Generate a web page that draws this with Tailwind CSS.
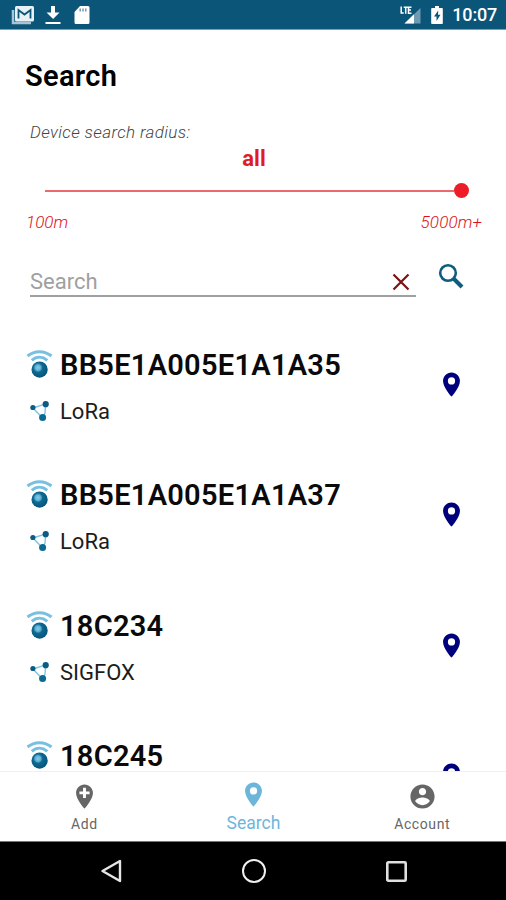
<!DOCTYPE html>
<html lang="en">
<head>
  <meta charset="UTF-8" />
  <meta name="viewport" content="width=device-width, initial-scale=1.0"/>
  <title>Search</title>
  <script src="https://cdn.jsdelivr.net/npm/@tailwindcss/browser@4"></script>
</head>
<body class="bg-white h-screen flex flex-col overflow-hidden font-[Roboto,sans-serif] text-black">

  <!-- Shared icons -->
  <svg class="absolute w-0 h-0" xmlns="http://www.w3.org/2000/svg">
    <defs>
      <radialGradient id="ball" cx="40%" cy="38%" r="62%">
        <stop offset="0" stop-color="#86cbe9"/>
        <stop offset="0.28" stop-color="#5fb0d4"/>
        <stop offset="0.46" stop-color="#0d6a92"/>
        <stop offset="1" stop-color="#07557a"/>
      </radialGradient>
    </defs>
    <symbol id="device" viewBox="0 0 28 30">
      <path d="M1.500 6C8.500.2 18.500.2 25.500 6" fill="none" stroke="#78c0e2" stroke-width="3"/>
      <path d="M5.800 10.300C10.500 6.300 16.500 6.300 21.300 10.300" fill="none" stroke="#78c0e2" stroke-width="3"/>
      <circle cx="13.600" cy="19.600" r="8.100" fill="url(#ball)"/>
    </symbol>
    <symbol id="network" viewBox="0 0 20 22">
      <path d="M3 7L15.700 2.900L15 12L12.600 17Z" fill="none" stroke="#7cc4e6" stroke-width="1.400"/>
      <circle cx="2.900" cy="6.500" r="2.600" fill="#0b5c82"/>
      <circle cx="15.700" cy="3.200" r="3.100" fill="#0b5c82"/>
      <circle cx="12.600" cy="16.500" r="3.500" fill="#0b6a92"/>
    </symbol>
    <symbol id="pin" viewBox="0 0 24 24">
      <path fill="currentColor" d="M12 2C8.130 2 5 5.130 5 9c0 5.250 7 13 7 13s7-7.750 7-13c0-3.870-3.130-7-7-7zm0 10a3 3 0 0 1 0-6 3 3 0 0 1 0 6z"/>
    </symbol>
  </svg>

  <!-- Status bar -->
  <header class="h-[30px] shrink-0 bg-[#0b5578] border-b border-[#7d9fb1] text-white flex items-center justify-between pl-[11px] pr-[9px]">
    <div class="flex items-center">
      <svg class="w-6 h-5" viewBox="0 0 24 20">
        <path d="M2 5v13h18" fill="none" stroke="#a9c5d4" stroke-width="2.500"/>
        <rect x="4" y="1" width="19" height="15.500" rx="1.500" fill="#e8f1f6"/>
        <path d="M7.500 13.500V5L13.500 9.500L19.500 5v8.500" fill="none" stroke="#0b5578" stroke-width="1.800"/>
      </svg>
      <svg class="w-4 h-5 ml-[10px]" viewBox="0 0 16 20">
        <path d="M6 1h4v6.500h4.500L8.100 14L1.500 7.500H6z" fill="#fff"/>
        <rect x="0.500" y="17" width="15" height="2" fill="#fff"/>
      </svg>
      <svg class="w-4 h-5 ml-[13px]" viewBox="0 0 16 20">
        <path d="M6 1h8a1.500 1.500 0 0 1 1.500 1.500v15A1.500 1.500 0 0 1 14 19H2a1.500 1.500 0 0 1-1.500-1.500V7z" fill="#fff"/>
        <path d="M6.200 3.500v3M9 3.500v3M11.800 3.500v3" stroke="#6b93a8" stroke-width="1.400"/>
      </svg>
    </div>
    <div class="flex items-center">
      <svg class="w-[22px] h-5" viewBox="0 0 22 20">
        <path d="M21.500 3v15.500H5.500z" fill="#6f9bb1"/>
        <path d="M15 9.300v9.200H5.500z" fill="#fff"/>
        <path d="M2.200 1.500v6.500h2.500M4.700 2.200h4M6.700 2.200v6.500M12.500 2.200h-3v6h3M9.500 5h2.500" fill="none" stroke="#fff" stroke-width="1.500"/>
      </svg>
      <svg class="w-3 h-5 ml-[10px]" viewBox="0 0 12 20">
        <path d="M4 1h4v2h3a.8.8 0 0 1 .8.8v14.400a.8.8 0 0 1-.8.8H1a.8.8 0 0 1-.8-.8V3.800A.8.8 0 0 1 1 3h3z" fill="#fff"/>
        <path d="M7.200 5.500L3 11.500h2.500v4.500L9.500 9.800H7z" fill="#0b5578"/>
      </svg>
      <span id="clock" class="ml-[9px] text-[18px] font-medium leading-5 tracking-[-0.2px]">10:07</span>
    </div>
  </header>

  <main class="flex-1 min-h-0 overflow-hidden">
    <h1 class="pt-7 pl-[25px] text-[29px] leading-9 font-semibold tracking-[0.3px]">Search</h1>

    <!-- Radius slider -->
    <section>
      <p class="pt-[27px] pl-[30px] text-[17px] leading-[22px] italic font-light tracking-[0.37px] text-[#444]">Device search radius:</p>
      <p class="pt-1 pl-[2px] text-center text-[22px] leading-6 font-bold text-[#e01b24]">all</p>
      <div class="mt-3 ml-[45px] mr-[37px] flex items-center">
        <div class="flex-1 h-[2px] bg-[#ec6a6f]"></div>
        <div class="w-[15px] h-[15px] rounded-full bg-[#ec1c28]"></div>
      </div>
      <div class="pt-[13px] pl-[26px] pr-6 flex justify-between text-[17px] leading-[22px] italic font-light text-[#dd1019]">
        <span>100m</span>
        <span class="tracking-[0.15px]">5000m+</span>
      </div>
    </section>

    <!-- Search field -->
    <section class="mt-[27px] ml-[30px] flex">
      <div class="w-[386px] h-[37px] border-b-2 border-[#a0a0a0] flex items-center justify-between pr-[6px] pt-[9px]">
        <span class="text-[22px] leading-7 text-[#a0a0a0]">Search</span>
        <svg class="w-[18px] h-[18px]" viewBox="0 0 18 18">
          <path d="M1.500 1.500L16.500 16.500M16.500 1.500L1.500 16.500" stroke="#7c1216" stroke-width="2.200" fill="none"/>
        </svg>
      </div>
      <svg class="w-[26px] h-[26px] ml-[22px] mt-[3px]" viewBox="0 0 26 26">
        <circle cx="10" cy="10" r="7.800" fill="none" stroke="#0f5c80" stroke-width="2.600"/>
        <path d="M15.500 15.500L24 24" stroke="#0f5c80" stroke-width="4"/>
      </svg>
    </section>

    <div id="deviceList" class="pt-[33px]"></div>
  </main>

  <!-- Tab bar -->
  <nav class="h-[70px] shrink-0 bg-white border-t border-[#f0f0f0] grid grid-cols-3 text-[#666]">
    <a class="flex flex-col items-center pt-[10px]">
      <svg class="w-[29px] h-[29px]" viewBox="0 0 24 24">
        <path fill="currentColor" d="M12 2C8.140 2 5 5.140 5 9c0 5.250 7 13 7 13s7-7.750 7-13c0-3.860-3.140-7-7-7zm4.200 8.200h-3v3h-2.400v-3h-3V7.800h3v-3h2.400v3h3v2.400z"/>
      </svg>
      <span class="mt-[3px] text-[14px] leading-5 tracking-[0.5px]">Add</span>
    </a>
    <a class="flex flex-col items-center pt-2 pl-[1px] text-[#6cb6dc]">
      <svg class="w-[29px] h-[29px]"><use href="#pin"/></svg>
      <span class="mt-[3px] text-[17.500px] leading-[22px]">Search</span>
    </a>
    <a class="flex flex-col items-center pt-[10px] pl-[1px]">
      <svg class="w-[29px] h-[29px]" viewBox="0 0 24 24">
        <path fill="currentColor" d="M12 2C6.480 2 2 6.480 2 12s4.480 10 10 10 10-4.480 10-10S17.520 2 12 2zm0 3c1.660 0 3 1.340 3 3s-1.340 3-3 3-3-1.340-3-3 1.340-3 3-3zm0 14.200c-2.500 0-4.710-1.280-6-3.220.030-1.990 4-3.080 6-3.080 1.990 0 5.970 1.090 6 3.080-1.290 1.940-3.500 3.220-6 3.220z"/>
      </svg>
      <span class="mt-[3px] text-[14px] leading-5 tracking-[0.6px]">Account</span>
    </a>
  </nav>

  <!-- System buttons -->
  <footer class="h-[59px] shrink-0 bg-black border-t border-[#777] flex items-center justify-between pl-[100px] pr-[99px]">
    <svg class="w-[22px] h-6" viewBox="0 0 22 24">
      <path d="M20 2v20L2.500 12z" fill="none" stroke="#e6e6e6" stroke-width="2.400" stroke-linejoin="round"/>
    </svg>
    <div class="w-6 h-6 mr-[1px] rounded-full border-[2.500px] border-[#f0f0f0]"></div>
    <svg class="w-[21px] h-[21px]" viewBox="0 0 21 21">
      <rect x="1.300" y="1.300" width="18.400" height="18.400" rx="1" fill="none" stroke="#e0e0e0" stroke-width="2.600"/>
    </svg>
  </footer>

  <script>
    const devices = [
      { id: "BB5E1A005E1A1A35", network: "LoRa" },
      { id: "BB5E1A005E1A1A37", network: "LoRa" },
      { id: "18C234", network: "SIGFOX" },
      { id: "18C245" }
    ];

    document.getElementById("deviceList").innerHTML = devices.map(device => `
      <div class="h-[130.3px] pt-[17px] pl-[26px] pr-10 flex">
        <div class="flex-1">
          <div class="flex items-center">
            <svg class="w-7 h-[30px]"><use href="#device"/></svg>
            <span class="ml-[6px] h-9 text-[29px] leading-9 font-semibold tracking-[0.27px] text-[#0a0a0a]">${device.id}</span>
          </div>
          ${device.network ? `
          <div class="mt-[15px] pl-1 flex items-center">
            <svg class="w-5 h-[22px]"><use href="#network"/></svg>
            <span class="ml-[10px] text-[22px] leading-7 text-[#1c1c1c]">${device.network}</span>
          </div>` : ""}
        </div>
        <svg class="w-[29px] h-[29px] mt-[23px] text-[#00007c]"><use href="#pin"/></svg>
      </div>`).join("");
  </script>
</body>
</html>
